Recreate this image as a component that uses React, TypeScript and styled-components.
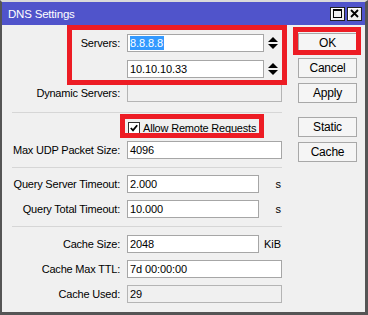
import React from 'react'
import styled, { createGlobalStyle } from 'styled-components'

const GlobalStyle = createGlobalStyle`
  html, body {
    margin: 0;
    padding: 0;
    background: #f0f0f0;
  }
  body {
    font-family: 'Liberation Sans', Arial, sans-serif;
    font-size: 11px;
    color: #000;
  }
  * {
    box-sizing: border-box;
  }
`

// page frame
const Stage = styled.div`
  position: relative;
  width: 368px;
  height: 315px;
`

const Window = styled.div`
  width: 368px;
  height: 315px;
  display: flex;
  flex-direction: column;
  background: #f0f0f0;
  border-top: 2px solid #dadada;
  border-left: 2px solid #555;
  border-right: 3px solid #555;
  border-bottom: 3px solid #555;
`

const TitleBar = styled.div`
  height: 23px;
  display: flex;
  align-items: center;
  justify-content: space-between;
  padding: 0 3px 0 6px;
  background: #5054cb;
  color: #fff;
  font-size: 11.5px;
  letter-spacing: -0.2px;
`

const TitleButtons = styled.div`
  display: flex;
  gap: 2px;
`

const TitleButton = styled.div`
  width: 15px;
  height: 14px;
  display: flex;
  align-items: center;
  justify-content: center;
  background: #f0f0f0;
  border: 1px solid #222;
  box-shadow: inset 1px 1px 0 #fff;
`

const Body = styled.div`
  flex: 1;
  display: flex;
`

// form side
const Form = styled.div`
  width: 285px;
  display: flex;
  flex-direction: column;
  padding-top: 9px;
`

type RowProps = { $mt?: number; $h?: number }
const Row = styled.div<RowProps>`
  display: grid;
  grid-template-columns: 118px 155px;
  column-gap: 7px;
  height: ${(p) => p.$h ?? 18}px;
  margin-top: ${(p) => p.$mt ?? 0}px;
`

const Label = styled.div`
  align-self: center;
  text-align: right;
  white-space: nowrap;
  letter-spacing: -0.2px;
`

const FieldGroup = styled.div`
  display: flex;
  align-items: center;
`

type FieldProps = { $w?: number; $disabled?: boolean }
const Field = styled.div<FieldProps>`
  width: ${(p) => p.$w ?? 155}px;
  height: 18px;
  display: flex;
  align-items: center;
  padding-left: 2px;
  background: ${(p) => (p.$disabled ? '#f0f0f0' : '#fff')};
  border: 1px solid ${(p) => (p.$disabled ? '#b4b4b4' : '#a6a6a6')};
  white-space: nowrap;
  letter-spacing: -0.1px;
`

const Selected = styled.span`
  background: #3399ff;
  color: #fff;
  line-height: 14px;
  padding: 0 1px 0 0;
`

const Spinner = styled.div`
  width: 18px;
  display: flex;
  justify-content: center;
`

const Unit = styled.div`
  flex: 1;
  text-align: right;
  padding-right: 1px;
`

const Separator = styled.div<{ $mt: number }>`
  margin: ${(p) => p.$mt}px 0 0 10px;
  width: 270px;
  height: 1px;
  background: #d6d6d6;
`

const CheckLabel = styled.div`
  display: flex;
  align-items: center;
  gap: 3px;
  padding-left: 1px;
  white-space: nowrap;
  letter-spacing: -0.2px;
`

const CheckBox = styled.div`
  width: 12px;
  height: 12px;
  display: flex;
  align-items: center;
  justify-content: center;
  background: #fff;
  border: 1px solid #333;
`

// button side
const Actions = styled.div`
  display: flex;
  flex-direction: column;
  padding: 8px 0 0 11px;
`

const Button = styled.div<{ $mt?: number }>`
  width: 59px;
  height: 20px;
  margin-top: ${(p) => p.$mt ?? 0}px;
  display: flex;
  align-items: center;
  justify-content: center;
  background: #f5f5f5;
  border: 1px solid #a8a8a8;
  font-size: 12px;
  letter-spacing: -0.2px;
`

// red annotation boxes drawn over the dialog
type BoxProps = { $x: number; $y: number; $w: number; $h: number }
const Highlight = styled.div<BoxProps>`
  position: absolute;
  left: ${(p) => p.$x}px;
  top: ${(p) => p.$y}px;
  width: ${(p) => p.$w}px;
  height: ${(p) => p.$h}px;
  border: 5px solid #ed1c24;
  pointer-events: none;
`

const SpinIcon = () => (
  <svg width="10" height="13" viewBox="0 0 10 13">
    <path d="M5 0 L10 5 L0 5 Z" fill="#000" />
    <path d="M0 7 L10 7 L5 12 Z" fill="#000" />
  </svg>
)

const CheckIcon = () => (
  <svg width="8" height="8" viewBox="0 0 8 8">
    <path d="M0.8 4 L3 6.3 L7.2 1.2" stroke="#000" strokeWidth="1.8" fill="none" />
  </svg>
)

const App: React.FC = () => {
  return (
    <Stage>
      <GlobalStyle />
      <Window>
        <TitleBar>
          <span>DNS Settings</span>
          <TitleButtons>
            <TitleButton>
              <svg width="9" height="9" viewBox="0 0 9 9">
                <rect x="0.5" y="0.5" width="8" height="8" fill="none" stroke="#000" />
                <rect x="0" y="0" width="9" height="2" fill="#000" />
              </svg>
            </TitleButton>
            <TitleButton>
              <svg width="9" height="9" viewBox="0 0 9 9">
                <path d="M1 1 L8 8 M8 1 L1 8" stroke="#000" strokeWidth="1.8" />
              </svg>
            </TitleButton>
          </TitleButtons>
        </TitleBar>
        <Body>
          <Form>
            <Row>
              <Label>Servers:</Label>
              <FieldGroup>
                <Field $w={137}>
                  <Selected>8.8.8.8</Selected>
                </Field>
                <Spinner>
                  <SpinIcon />
                </Spinner>
              </FieldGroup>
            </Row>
            <Row $mt={8}>
              <span />
              <FieldGroup>
                <Field $w={137}>10.10.10.33</Field>
                <Spinner>
                  <SpinIcon />
                </Spinner>
              </FieldGroup>
            </Row>
            <Row $mt={6}>
              <Label>Dynamic Servers:</Label>
              <Field $disabled />
            </Row>
            <Separator $mt={10} />
            <Row $mt={6} $h={17}>
              <span />
              <CheckLabel>
                <CheckBox>
                  <CheckIcon />
                </CheckBox>
                Allow Remote Requests
              </CheckLabel>
            </Row>
            <Row $mt={5}>
              <Label>Max UDP Packet Size:</Label>
              <Field>4096</Field>
            </Row>
            <Separator $mt={8} />
            <Row $mt={7}>
              <Label>Query Server Timeout:</Label>
              <FieldGroup>
                <Field $w={132}>2.000</Field>
                <Unit>s</Unit>
              </FieldGroup>
            </Row>
            <Row $mt={7}>
              <Label>Query Total Timeout:</Label>
              <FieldGroup>
                <Field $w={132}>10.000</Field>
                <Unit>s</Unit>
              </FieldGroup>
            </Row>
            <Separator $mt={8} />
            <Row $mt={8}>
              <Label>Cache Size:</Label>
              <FieldGroup>
                <Field $w={132}>2048</Field>
                <Unit>KiB</Unit>
              </FieldGroup>
            </Row>
            <Row $mt={7}>
              <Label>Cache Max TTL:</Label>
              <Field>7d 00:00:00</Field>
            </Row>
            <Row $mt={7}>
              <Label>Cache Used:</Label>
              <Field $disabled>29</Field>
            </Row>
          </Form>
          <Actions>
            <Button>OK</Button>
            <Button $mt={5}>Cancel</Button>
            <Button $mt={5}>Apply</Button>
            <Button $mt={14}>Static</Button>
            <Button $mt={5}>Cache</Button>
          </Actions>
        </Body>
      </Window>
      <Highlight $x={67} $y={25} $w={220} $h={60} />
      <Highlight $x={293} $y={27} $w={68} $h={28} />
      <Highlight $x={120} $y={114} $w={144} $h={24} />
    </Stage>
  )
}

export default App
